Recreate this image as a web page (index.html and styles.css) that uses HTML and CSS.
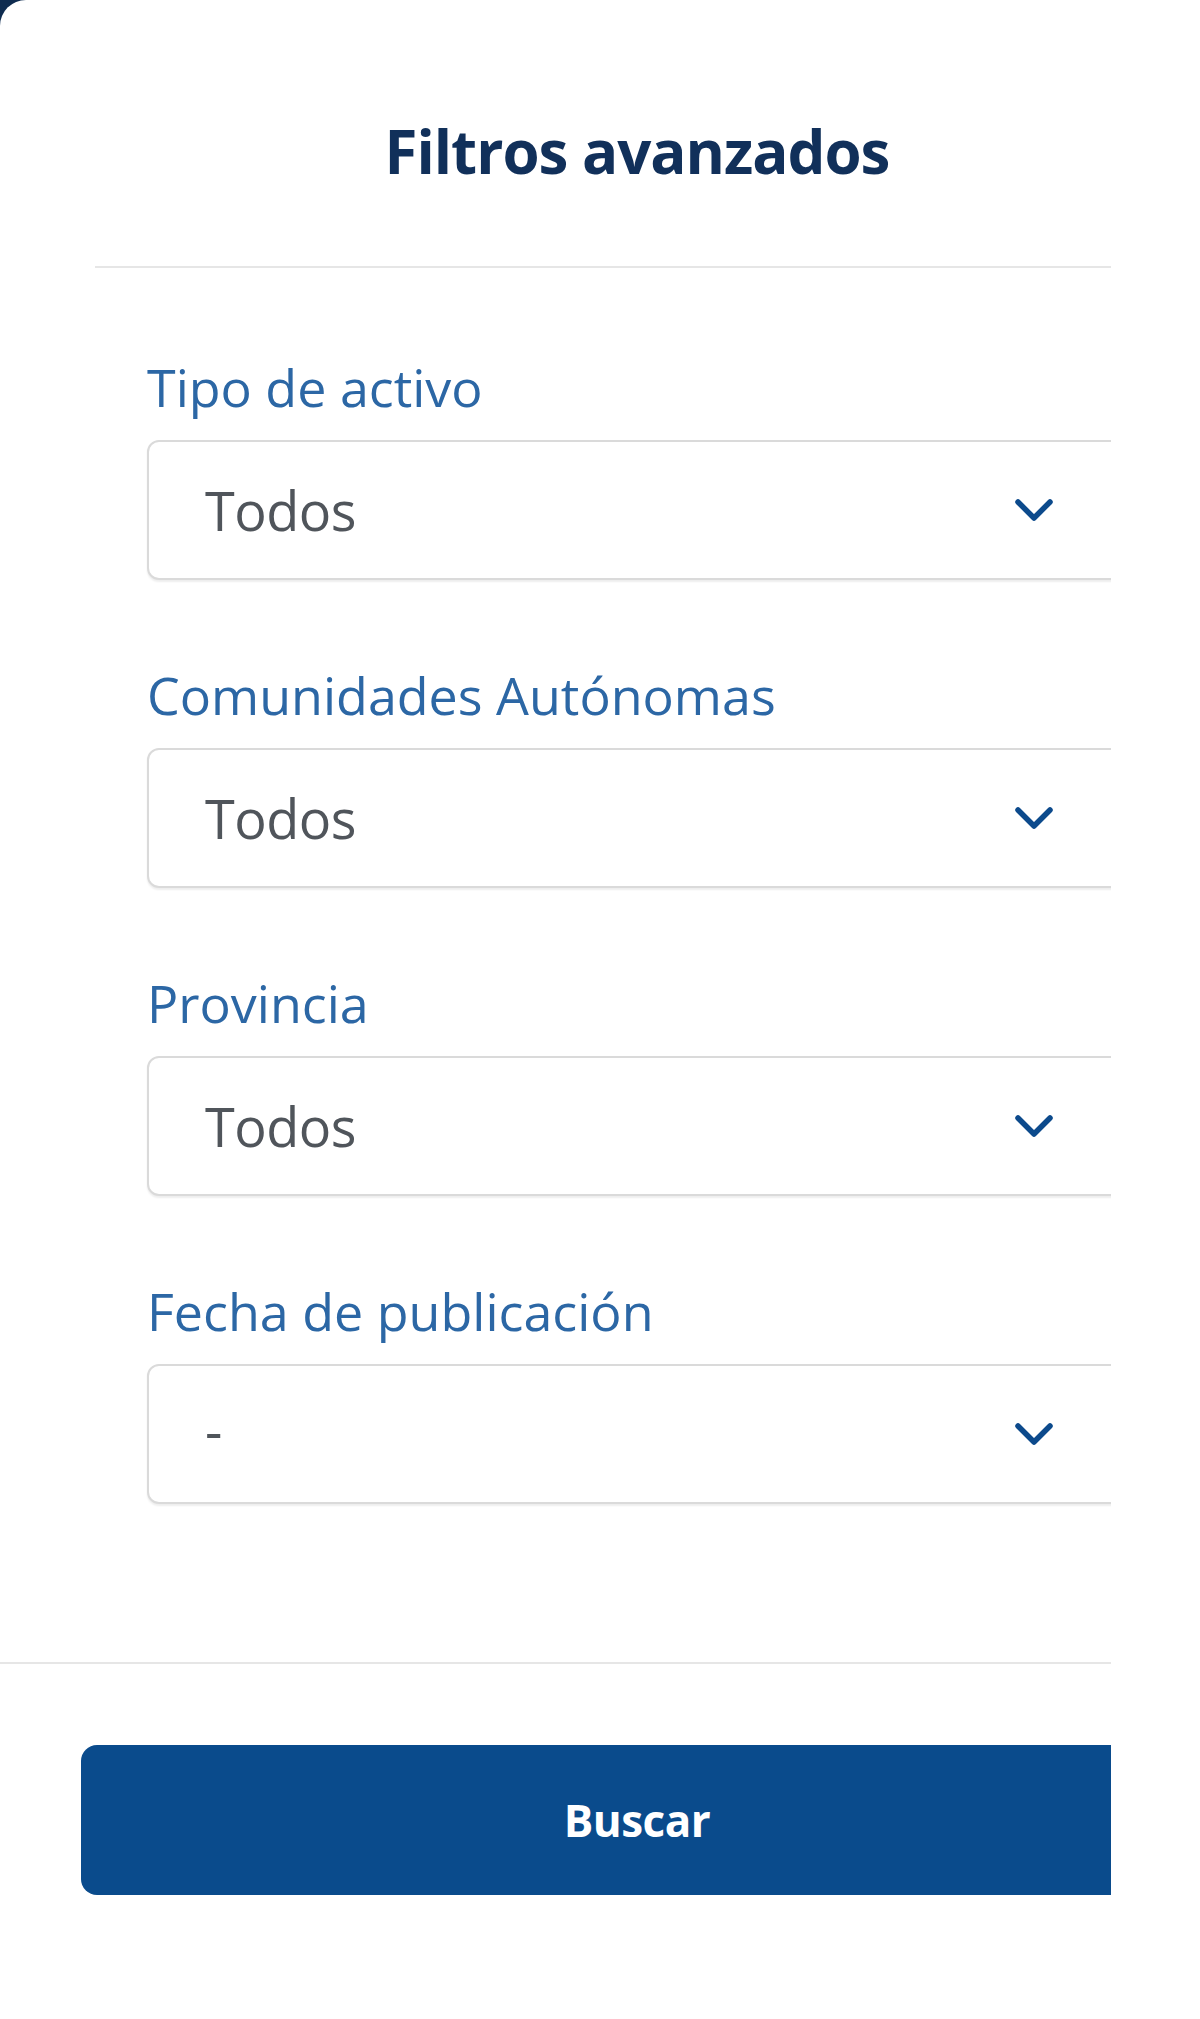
FILE: index.html
```html
<!DOCTYPE html>
<html lang="es">
<head>
<meta charset="utf-8">
<title>Filtros avanzados</title>
<link rel="stylesheet" href="styles.css">
</head>
<body>
<div class="backdrop">
  <div class="sheet">
    <div class="sheet-inner">
      <header class="sheet-header">
        <h1 class="sheet-title">Filtros avanzados</h1>
      </header>
      <hr class="divider divider-top">
      <form class="filters">
        <div class="field">
          <label class="field-label">Tipo de activo</label>
          <div class="select">
            <span class="select-value">Todos</span>
            <svg class="chevron" viewBox="0 0 40 24" width="40" height="24"><polyline points="4,4 20,20 36,4"/></svg>
          </div>
        </div>
        <div class="field">
          <label class="field-label">Comunidades Autónomas</label>
          <div class="select">
            <span class="select-value">Todos</span>
            <svg class="chevron" viewBox="0 0 40 24" width="40" height="24"><polyline points="4,4 20,20 36,4"/></svg>
          </div>
        </div>
        <div class="field">
          <label class="field-label">Provincia</label>
          <div class="select">
            <span class="select-value">Todos</span>
            <svg class="chevron" viewBox="0 0 40 24" width="40" height="24"><polyline points="4,4 20,20 36,4"/></svg>
          </div>
        </div>
        <div class="field">
          <label class="field-label">Fecha de publicación</label>
          <div class="select">
            <span class="select-value select-dash">-</span>
            <svg class="chevron" viewBox="0 0 40 24" width="40" height="24"><polyline points="4,4 20,20 36,4"/></svg>
          </div>
        </div>
      </form>
      <hr class="divider divider-bottom">
      <div class="actions">
        <button class="btn-primary" type="button">Buscar</button>
      </div>
    </div>
  </div>
</div>
</body>
</html>
```

FILE: styles.css
```css
html, body {
  margin: 0;
  padding: 0;
  background: #ffffff;
}

body {
  font-family: "Open Sans", "Noto Sans", sans-serif;
}

.backdrop {
  width: 1111px;
  min-height: 2019px;
  background: #0f2c50;
  display: flex;
}

.sheet {
  flex: 1;
  background: #ffffff;
  border-top-left-radius: 26px;
  overflow: hidden;
}

.sheet-inner {
  width: 1274px;
  display: flex;
  flex-direction: column;
}

.sheet-header {
  padding-top: 111px;
  display: flex;
  justify-content: center;
}

.sheet-title {
  margin: 0;
  font-size: 60px;
  line-height: 80px;
  font-weight: 700;
  letter-spacing: -1px;
  color: #11305a;
}

.divider {
  border: 0;
  height: 2px;
  background: #e6e6e6;
  margin: 0;
}

.divider-top {
  margin: 75px 95px 0 95px;
}

.filters {
  margin: 89px 147px 0 147px;
  display: flex;
  flex-direction: column;
  gap: 85px;
}

.field {
  display: flex;
  flex-direction: column;
}

.field-label {
  font-size: 52px;
  line-height: 60px;
  color: #2c67a5;
  margin-bottom: 23px;
}

.select {
  box-sizing: border-box;
  height: 140px;
  border: 2px solid #dadada;
  border-radius: 12px;
  box-shadow: 0 2px 2px rgba(0, 0, 0, 0.07);
  padding: 0 71px 0 56px;
  display: flex;
  align-items: center;
  justify-content: space-between;
  background: #ffffff;
}

.select-value {
  font-size: 54px;
  color: #50555b;
  letter-spacing: -0.5px;
}

.select-dash {
  position: relative;
  top: -4px;
}

.chevron {
  display: block;
  fill: none;
  stroke: #0c4a8c;
  stroke-width: 5.5;
  stroke-linecap: round;
  stroke-linejoin: round;
}

.divider-bottom {
  margin-top: 158px;
}

.actions {
  padding: 81px 81px 0 81px;
}

.btn-primary {
  width: 100%;
  height: 150px;
  border: 0;
  border-radius: 16px;
  background: #0a4b8c;
  color: #ffffff;
  font-family: "Open Sans", "Noto Sans", sans-serif;
  font-size: 44px;
  font-weight: 700;
  letter-spacing: -0.5px;
  display: flex;
  align-items: center;
  justify-content: center;
}
```
